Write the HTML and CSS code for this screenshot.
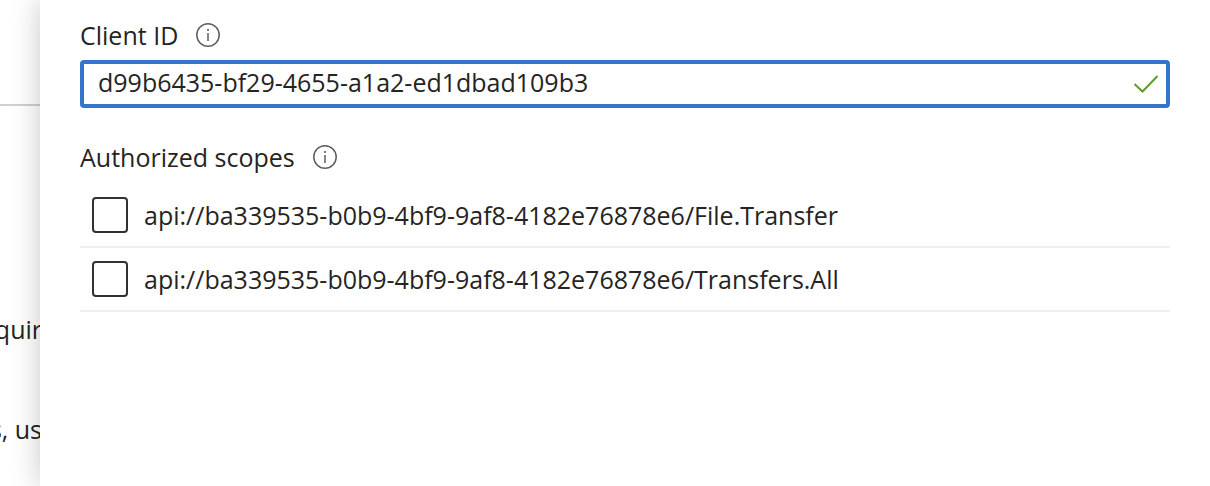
FILE: index.html
```html
<!DOCTYPE html>
<html lang="en">
<head>
<meta charset="utf-8">
<title>Add a client application</title>
<link rel="stylesheet" href="styles.css">
</head>
<body>
<div class="page">
  <main class="background">
    <hr class="rule">
    <p class="clip">quir</p>
    <p class="clip">s, us</p>
  </main>
  <section class="panel">
    <div class="heading">
      <label for="client">Client ID</label>
      <svg class="info" viewBox="0 0 24 24" aria-hidden="true"><circle cx="12" cy="12" r="11.200"/><path d="M12 10v8"/><circle class="dot" cx="12" cy="7" r="1.100"/></svg>
    </div>
    <div class="field">
      <input id="client" type="text" value="d99b6435-bf29-4655-a1a2-ed1dbad109b3">
      <svg class="check" viewBox="0 0 26 20" aria-hidden="true"><path d="M1.500 10l8 7.500L24.500 2"/></svg>
    </div>
    <div class="heading scopes-heading">
      <span id="scopes">Authorized scopes</span>
      <svg class="info" viewBox="0 0 24 24" aria-hidden="true"><circle cx="12" cy="12" r="11.200"/><path d="M12 10v8"/><circle class="dot" cx="12" cy="7" r="1.100"/></svg>
    </div>
    <div class="scopes" role="group" aria-labelledby="scopes">
      <label class="scope"><input type="checkbox"><span>api://ba339535-b0b9-4bf9-9af8-4182e76878e6/File.Transfer</span></label>
      <label class="scope"><input type="checkbox"><span>api://ba339535-b0b9-4bf9-9af8-4182e76878e6/Transfers.All</span></label>
    </div>
  </section>
</div>
</body>
</html>
```
FILE: styles.css
```css
* { box-sizing: border-box; }
body {
  margin: 0;
  background: #fff;
  color: #252423;
  font-family: "Open Sans", "Noto Sans", sans-serif;
  font-size: 25px;
  line-height: 32px;
}
.page {
  display: grid;
  grid-template-columns: 40px 1fr;
  min-height: 100vh;
  overflow: hidden;
}
.background { overflow: hidden; padding-top: 104px; }
.rule { margin: 0 0 207px; border: 0; border-top: 2px solid #d2d0ce; }
.clip {
  display: flex;
  justify-content: flex-end;
  margin: 0 -2px 0 0;
  white-space: nowrap;
}
.clip + .clip { margin-top: 68px; }
.panel {
  position: relative;
  padding: 19px 40px;
  background: #fff;
  box-shadow: 0 0 28px rgba(0, 0, 0, 0.22);
}
.heading { display: flex; align-items: center; gap: 18px; height: 32px; }
.info {
  width: 24px;
  height: 24px;
  margin-bottom: 1px;
  fill: none;
  stroke: #605e5c;
  stroke-width: 1.5;
}
.info .dot { fill: #605e5c; stroke: none; }
.field {
  display: flex;
  align-items: center;
  height: 48px;
  margin-top: 9px;
  padding: 0 7px 0 14px;
  border: 4px solid #3375cc;
  border-radius: 4px;
}
.field input {
  flex: 1;
  min-width: 0;
  padding: 0 0 4px;
  border: 0;
  outline: 0;
  background: none;
  color: inherit;
  font: inherit;
}
.check { width: 26px; height: 20px; fill: none; stroke: #5b9f2b; stroke-width: 2; }
.scopes-heading { margin-top: 33px; }
.scopes { margin-top: 11px; }
.scope {
  display: flex;
  align-items: center;
  gap: 16px;
  height: 64px;
  padding-left: 12px;
  border-bottom: 2px solid #f0f0f0;
}
.scope input {
  appearance: none;
  width: 36px;
  height: 36px;
  margin: 0;
  border: 2px solid #323130;
  border-radius: 4px;
}
```
